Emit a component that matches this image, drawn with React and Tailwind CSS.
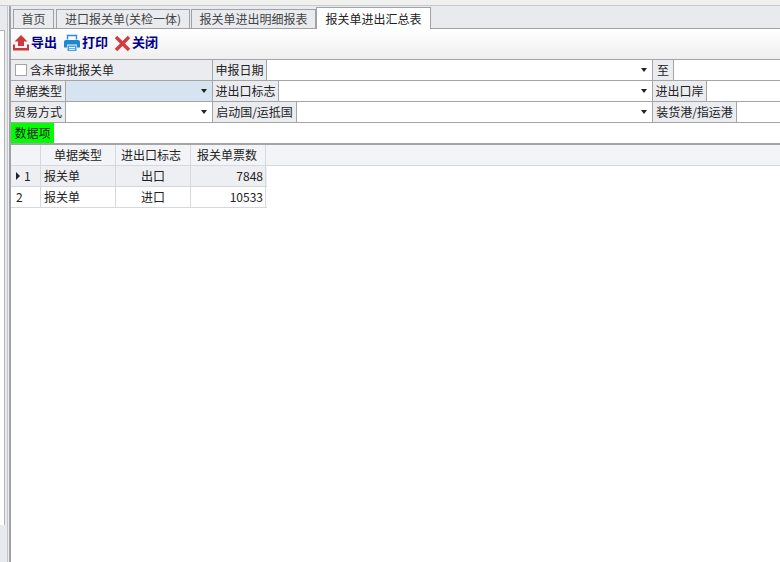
const font = { fontFamily: '"Noto Sans CJK SC", "Liberation Sans", sans-serif' }

function Tab({ children, active, className }) {
  if (active) {
    return (
      <div className={`h-[22px] -mb-px border border-b-0 border-[#a0a2a8] bg-white flex items-center justify-center text-[12px] text-[#222] ${className}`}>{children}</div>
    )
  }
  return (
    <div className={`h-[19px] border border-b-0 border-[#a0a2a8] bg-[#eaebef] flex items-center justify-center text-[12px] text-[#444] ${className}`}>{children}</div>
  )
}

function Label({ children, className = '' }) {
  return <div className={`h-full shrink-0 bg-[#ebecf0] border-r border-[#a5a5a5] flex items-center justify-center text-[12px] text-[#222] whitespace-nowrap ${className}`}>{children}</div>
}

function Arrow() {
  return <span className="ml-auto mr-[5px] w-0 h-0 border-x-[3px] border-x-transparent border-t-[4px] border-t-[#222]" />
}

function Field({ className = '', arrow }) {
  return <div className={`h-full flex items-center border-r border-[#a5a5a5] ${className}`}>{arrow && <Arrow />}</div>
}

function ToolButton({ icon, children, className = '' }) {
  return (
    <div className={`flex items-center gap-px text-[13px] font-bold text-[#00008b] ${className}`}>
      {icon}
      <span className="-translate-y-px">{children}</span>
    </div>
  )
}

function Row({ children }) {
  return <div className="h-[21px] flex border-b border-[#a5a5a5]">{children}</div>
}

export default function App() {
  const rows = [
    { n: 1, type: '报关单', flag: '出口', count: '7848', current: true },
    { n: 2, type: '报关单', flag: '进口', count: '10533' },
  ]

  return (
    <div className="w-[780px] h-[562px] overflow-hidden bg-white flex flex-col" style={font}>
      <div className="h-[6px] shrink-0 bg-[#f0f0ee] border-b border-[#c8c9cc]" />
      <div className="flex-1 flex min-h-0">
        {/* left sidebar edge */}
        <div className="w-[11px] shrink-0 flex">
          <div className="w-[8px] bg-[#e9eaee] border-r border-[#c4c5c9] flex flex-col pt-[24px]">
            <div className="h-[495px] w-[5px] bg-white border-t border-r border-[#b4b5ba]" />
          </div>
          <div className="w-px bg-[#eeeff2]" />
          <div className="w-[2px] bg-[#a0a2a8]" />
        </div>

        <div className="flex-1 min-w-0 flex flex-col">
          <div className="h-[23px] shrink-0 bg-[#e9eaee] border-b border-[#a0a2a8] flex items-end pl-[2px]">
            <Tab className="w-[41px]">首页</Tab>
            <Tab className="w-[134px] ml-[2px]">进口报关单(关检一体)</Tab>
            <Tab className="w-[125px] ml-px">报关单进出明细报表</Tab>
            <Tab active className="w-[115px]">报关单进出汇总表</Tab>
          </div>

          <div className="h-[31px] shrink-0 bg-gradient-to-b from-white to-[#efefef] border-b border-[#a5a5a5] flex items-center pl-[1px] pb-[2px]">
            <ToolButton
              icon={
                <svg width="18" height="18" viewBox="0 0 18 18">
                  <path d="M9 1 L15.5 7.5 H12 V12 H6 V7.5 H2.5 Z" fill="#d0393b" />
                  <path d="M1 10.5 H3 V14 H15 V10.5 H17 V16.5 H1 Z" fill="#c9383a" />
                </svg>
              }
            >导出</ToolButton>
            <ToolButton
              className="ml-[6px]"
              icon={
                <svg width="18" height="18" viewBox="0 0 18 18">
                  <path d="M4.5 5.5 V1.5 H13.5 V5.5" fill="none" stroke="#2b8fd6" strokeWidth="1.4" />
                  <path d="M3 6 H15 Q17 6 17 8 V13.5 H14 V10.5 H4 V13.5 H1 V8 Q1 6 3 6 Z" fill="#1f87d0" />
                  <path d="M4.5 11.5 H13.5 V17 H4.5 Z" fill="#3f9fe2" />
                  <path d="M6 13.5 H12 M6 15.3 H12" stroke="#fff" strokeWidth="1" />
                </svg>
              }
            >打印</ToolButton>
            <ToolButton
              className="ml-[6px]"
              icon={
                <svg width="17" height="17" viewBox="0 0 17 17">
                  <path d="M2 2 L15 15 M15 2 L2 15" stroke="#d13d3f" strokeWidth="3.4" />
                </svg>
              }
            >关闭</ToolButton>
          </div>

          <div className="shrink-0">
            <Row>
              <div className="w-[202px] shrink-0 h-full bg-[#ebecf0] border-r border-[#a5a5a5] flex items-center pl-[4px] gap-[3px] text-[12px] text-[#222]">
                <span className="w-[12px] h-[12px] border border-[#a5a5a5] bg-white" />
                含未审批报关单
              </div>
              <Label className="w-[54px]">申报日期</Label>
              <Field className="w-[386px]" arrow />
              <Label className="w-[21px]">至</Label>
              <div className="flex-1" />
            </Row>
            <Row>
              <Label className="w-[55px]">单据类型</Label>
              <Field className="w-[147px] bg-[#d6e3f0]" arrow />
              <Label className="w-[66px]">进出口标志</Label>
              <Field className="w-[374px]" arrow />
              <Label className="w-[54px]">进出口岸</Label>
              <div className="flex-1" />
            </Row>
            <Row>
              <Label className="w-[55px]">贸易方式</Label>
              <Field className="w-[147px]" arrow />
              <Label className="w-[84px]">启动国/运抵国</Label>
              <Field className="w-[356px]" arrow />
              <Label className="w-[84px]">装货港/指运港</Label>
              <div className="flex-1" />
            </Row>
          </div>

          <div className="h-[22px] shrink-0 flex border-b-2 border-[#a5a5a5]">
            <div className="w-[43px] bg-[#00ff00] flex items-center justify-center text-[12px] text-[#222]">数据项</div>
          </div>

          <div className="flex-1 bg-white text-[12px] text-[#222]">
            <div className="flex h-[21px] bg-[#f3f4f7] border-b border-[#d6d8de]">
              <div className="w-[30px] border-r border-[#d6d8de]" />
              <div className="w-[75px] border-r border-[#d6d8de] flex items-center justify-center">单据类型</div>
              <div className="w-[75px] border-r border-[#d6d8de] flex items-center justify-center pr-[4px]">进出口标志</div>
              <div className="w-[75px] border-r border-[#d6d8de] flex items-center justify-center pr-[2px]">报关单票数</div>
            </div>
            {rows.map((r) => (
              <div key={r.n} className={`flex h-[21px] w-[256px] border-b border-[#d6d8de] ${r.current ? 'bg-[#eeeff2]' : 'bg-white'}`}>
                <div className="w-[30px] border-r border-[#d6d8de] flex items-center pl-[5px]">
                  {r.current && <span className="w-0 h-0 mr-[4px] border-y-[4px] border-y-transparent border-l-[4px] border-l-[#222]" />}
                  <span>{r.n}</span>
                </div>
                <div className="w-[75px] border-r border-[#d6d8de] flex items-center pl-[3px]">{r.type}</div>
                <div className="w-[75px] border-r border-[#d6d8de] flex items-center justify-center">{r.flag}</div>
                <div className="w-[75px] border-r border-[#d6d8de] flex items-center justify-end pr-[2px]">{r.count}</div>
              </div>
            ))}
          </div>
        </div>
      </div>
    </div>
  )
}
